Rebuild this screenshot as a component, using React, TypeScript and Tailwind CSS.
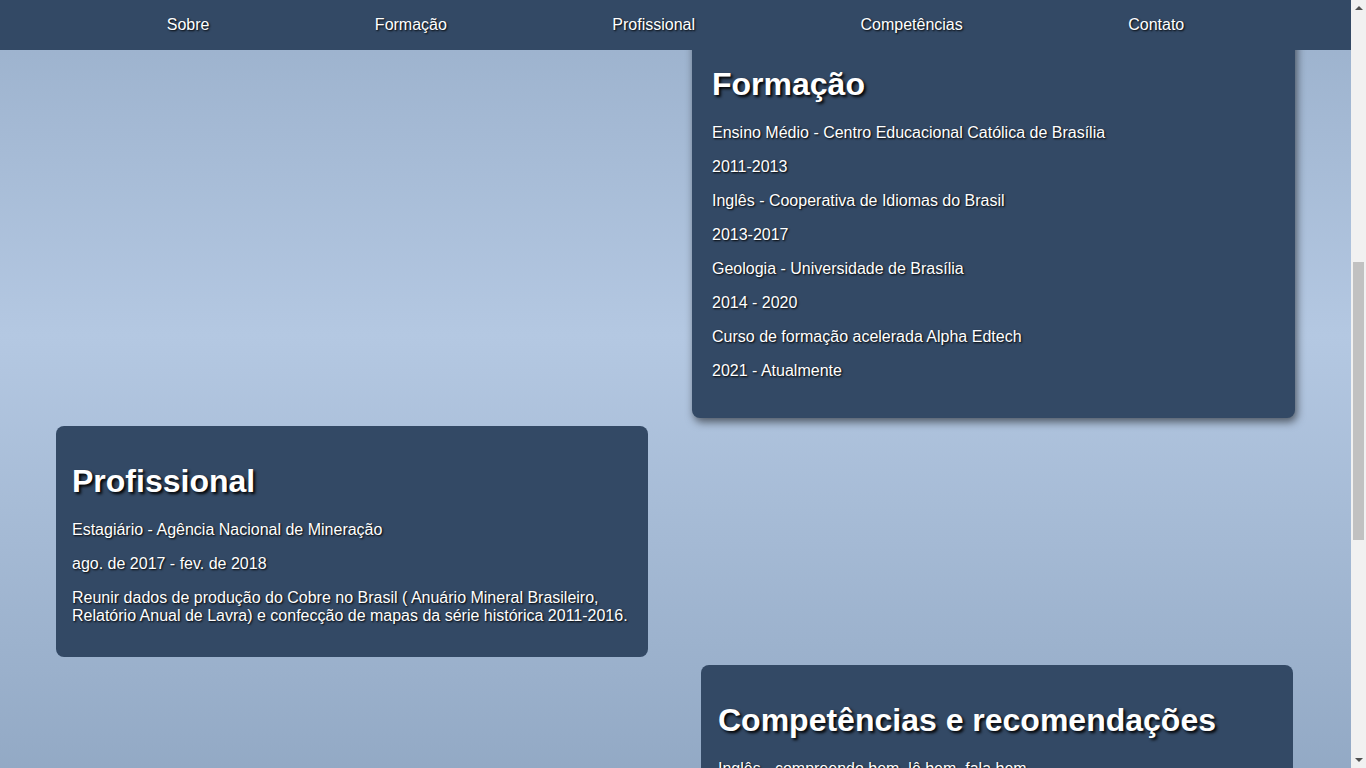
import { useLayoutEffect } from "react";

const navItems = ["Sobre", "Formação", "Profissional", "Competências", "Contato"];

const formacao = [
  "Ensino Médio - Centro Educacional Católica de Brasília",
  "2011-2013",
  "Inglês - Cooperativa de Idiomas do Brasil",
  "2013-2017",
  "Geologia - Universidade de Brasília",
  "2014 - 2020",
  "Curso de formação acelerada Alpha Edtech",
  "2021 - Atualmente",
];

const competencias = [
  "Inglês - compreendo bem, lê bem, fala bem",
  "Espanhol - compreendo bem, lê bem, fala razoavelmente",
  "Pacote Office - avançado",
  "ArcGIS e QGIS - intermediário",
  "HTML, CSS e JavaScript - em aprendizado",
  "Trabalho em equipe e boa comunicação",
];

const contato = [
  "E-mail: contato@exemplo.com",
  "Telefone: (61) 99999-9999",
  "LinkedIn: linkedin.com/in/perfil",
  "GitHub: github.com/perfil",
];

function Card({
  title,
  lines,
  className,
}: {
  title: string;
  lines: string[];
  className: string;
}) {
  return (
    <section className={`rounded-lg bg-[#334965] text-white ${className}`}>
      <h2 className="my-[21px] text-[32px] font-bold leading-[37px] [text-shadow:2px_2px_3px_#000]">
        {title}
      </h2>
      {lines.map((line) => (
        <p key={line} className="my-4 text-base leading-[18px] [text-shadow:1px_1px_2px_#000]">
          {line}
        </p>
      ))}
    </section>
  );
}

export default function App() {
  // the reference is photographed part way down the page
  useLayoutEffect(() => {
    window.scrollTo(0, 677);
  }, []);

  return (
    <div className="min-h-screen w-[1351px] overflow-x-hidden bg-[linear-gradient(180deg,#66809e_0%,#b4c8e2_50%,#66809e_100%)] pb-[115px] pt-[58px] font-['Liberation_Sans',Arial,sans-serif]">
      {/* header */}
      <header className="fixed left-0 right-[15px] top-0 z-10 h-[50px] bg-[#334965]">
        <nav className="mx-auto flex h-full w-[1183px] items-center justify-around">
          {navItems.map((item) => (
            <a
              key={item}
              href={`#${item}`}
              className="text-base text-white [text-shadow:1px_1px_2px_#000]"
            >
              {item}
            </a>
          ))}
        </nav>
      </header>

      {/* window scrollbar as it shows in the reference */}
      <div className="fixed bottom-0 right-0 top-0 z-20 flex w-[15px] flex-col items-center bg-[#f1f1f1]">
        <div className="mt-[6px] h-0 w-0 border-x-[4px] border-b-[4px] border-x-transparent border-b-[#505050]" />
        <div className="mt-[252px] h-[278px] w-[11px] bg-[#c1c1c1]" />
        <div className="mt-auto mb-[6px] h-0 w-0 border-x-[4px] border-t-[4px] border-x-transparent border-t-[#505050]" />
      </div>

      {/* sobre */}
      <section className="ml-[56px] h-[635px] w-[592px] rounded-lg bg-[#334965] px-4 py-4 text-white">
        <h2 className="my-[21px] text-[32px] font-bold leading-[37px] [text-shadow:2px_2px_3px_#000]">
          Sobre
        </h2>
        <div className="mx-auto my-6 h-[220px] w-[220px] rounded-full bg-[#4a6284]" />
        <p className="my-4 text-base leading-[18px] [text-shadow:1px_1px_2px_#000]">
          Geólogo formado pela Universidade de Brasília, em transição de carreira
          para a área de desenvolvimento de software.
        </p>
        <p className="my-4 text-base leading-[18px] [text-shadow:1px_1px_2px_#000]">
          Interessado em tecnologia, dados geográficos e soluções web.
        </p>
      </section>

      <Card
        title="Formação"
        lines={formacao}
        className="ml-[692px] mt-2 w-[603px] px-5 pb-[22px] pt-[21px] shadow-[2px_4px_8px_rgba(0,0,0,0.55)]"
      />

      <Card
        title="Profissional"
        lines={[
          "Estagiário - Agência Nacional de Mineração",
          "ago. de 2017 - fev. de 2018",
          "Reunir dados de produção do Cobre no Brasil ( Anuário Mineral Brasileiro, Relatório Anual de Lavra) e confecção de mapas da série histórica 2011-2016.",
        ]}
        className="ml-[56px] mt-2 w-[592px] p-4"
      />

      <Card
        title="Competências e recomendações"
        lines={competencias}
        className="ml-[701px] mt-2 w-[592px] px-[17px] py-4"
      />

      <Card
        title="Contato"
        lines={contato}
        className="ml-[56px] mt-2 w-[592px] p-4"
      />
    </div>
  );
}
